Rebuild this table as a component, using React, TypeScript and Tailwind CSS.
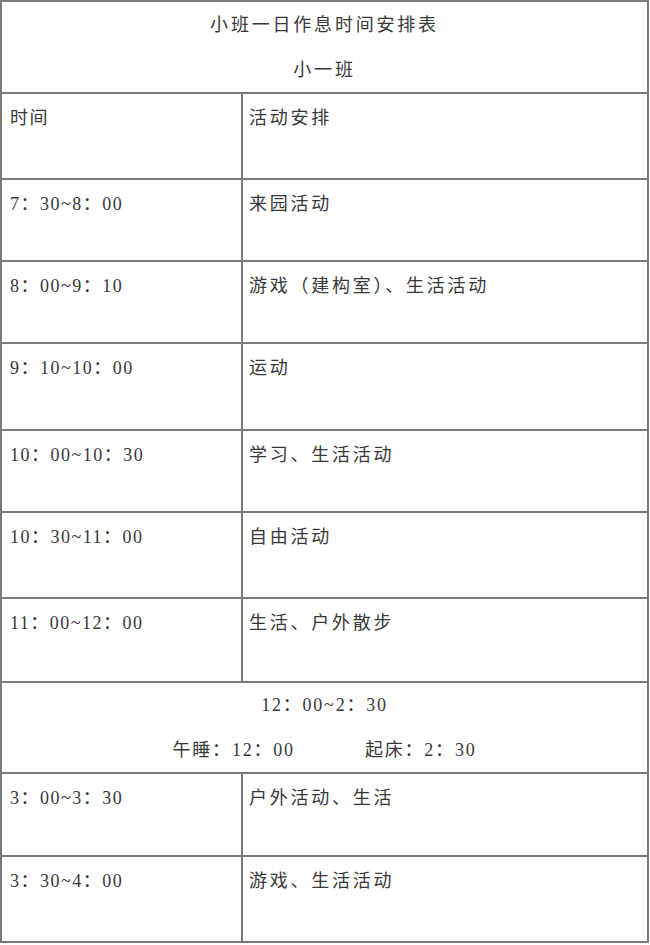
import React from "react";

const font = {
  fontFamily: '"Liberation Serif", "Noto Sans CJK SC", serif',
};

type Row = { time: string; act: string; h: string };

const rowsTop: Row[] = [
  { time: "时间", act: "活动安排", h: "h-[86px]" },
  { time: "7：30~8：00", act: "来园活动", h: "h-[82px]" },
  { time: "8：00~9：10", act: "游戏（建构室）、生活活动", h: "h-[82px]" },
  { time: "9：10~10：00", act: "运动", h: "h-[87px]" },
  { time: "10：00~10：30", act: "学习、生活活动", h: "h-[82px]" },
  { time: "10：30~11：00", act: "自由活动", h: "h-[86px]" },
  { time: "11：00~12：00", act: "生活、户外散步", h: "h-[84px]" },
];

const rowsBottom: Row[] = [
  { time: "3：00~3：30", act: "户外活动、生活", h: "h-[83px]" },
  { time: "3：30~4：00", act: "游戏、生活活动", h: "h-[86px]" },
];

function TRow({ r }: { r: Row }) {
  return (
    <div className={`flex border-t-2 border-[#7a7a7a] ${r.h}`}>
      <div className="w-[239px] shrink-0 pl-[8px] pt-[12px] text-[18px] leading-[24px] tracking-[1.5px]">
        {r.time}
      </div>
      <div className="flex-1 border-l-2 border-[#7a7a7a] pl-[6px] pt-[12px] text-[18px] leading-[24px] tracking-[2.75px]">
        {r.act}
      </div>
    </div>
  );
}

export default function App() {
  return (
    <div className="w-[650px] h-[945px] bg-white text-[#383838]" style={font}>
      <div className="w-[649px] h-[943px] border-2 border-[#7a7a7a] flex flex-col">
        <div className="h-[90px] flex flex-col items-center pt-[11px] text-[18px] leading-[24px] tracking-[2.8px] gap-[21px]">
          <div>小班一日作息时间安排表</div>
          <div>小一班</div>
        </div>
        {rowsTop.map((r, i) => (
          <TRow key={i} r={r} />
        ))}
        <div className="h-[91px] border-t-2 border-[#7a7a7a] flex flex-col items-center pt-[10px] text-[18px] leading-[24px] tracking-[1.8px] gap-[21px]">
          <div>12：00~2：30</div>
          <div className="flex gap-[70px]">
            <span>午睡：12：00</span>
            <span>起床：2：30</span>
          </div>
        </div>
        {rowsBottom.map((r, i) => (
          <TRow key={i} r={r} />
        ))}
      </div>
    </div>
  );
}
